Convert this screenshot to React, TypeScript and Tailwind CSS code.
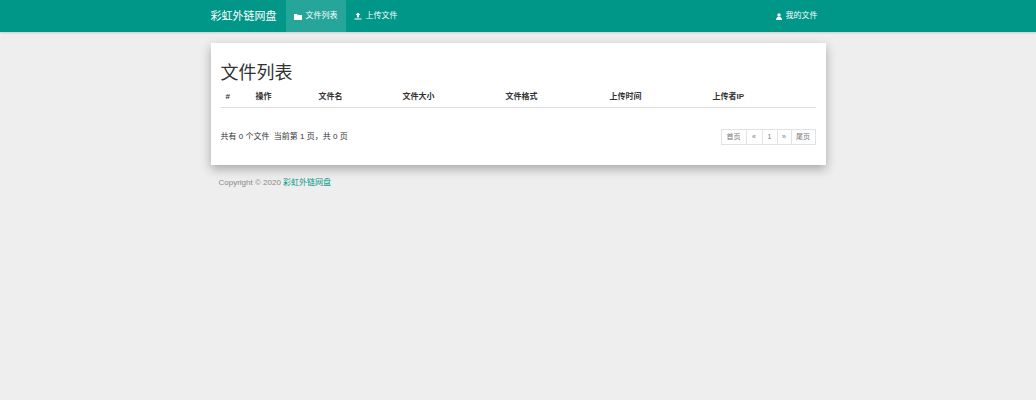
const font = { fontFamily: '"Liberation Sans", "Noto Sans CJK SC", sans-serif' }

export default function App() {
  const cols = [
    ["#", "w-[35px] pl-[5px]"],
    ["操作", "w-[63px]"],
    ["文件名", "w-[84px]"],
    ["文件大小", "w-[103px]"],
    ["文件格式", "w-[104px]"],
    ["上传时间", "w-[103px]"],
    ["上传者IP", "flex-1"],
  ]
  return (
    <div className="min-h-[400px] bg-[#eeeeee] text-[#333]" style={font}>
      <nav className="h-8 bg-[#009688] shadow-[0_1px_2px_rgba(0,0,0,0.15)]">
        <div className="mx-auto flex h-full w-[615px] items-stretch text-white">
          <span className="flex items-center px-0 text-[11px] pr-[9px]">彩虹外链网盘</span>
          <a className="flex items-center gap-1 bg-[#26a69a] px-2 text-[8px]">
            <svg width="8" height="7" viewBox="0 0 16 14" fill="white"><path d="M0 2h6l2 2h8v10H0z" /></svg>
            文件列表
          </a>
          <a className="flex items-center gap-1 px-2 text-[8px]">
            <svg width="8" height="8" viewBox="0 0 16 16" fill="white"><path d="M8 1l5 5h-3v5H6V6H3zM1 13h14v2H1z" /></svg>
            上传文件
          </a>
          <a className="ml-auto flex items-center gap-1 pr-2 text-[8px]">
            <svg width="6" height="7" viewBox="0 0 12 14" fill="white"><circle cx="6" cy="4" r="3.5" /><path d="M0 14c0-5 3-6 6-6s6 1 6 6z" /></svg>
            我的文件
          </a>
        </div>
      </nav>
      <div className="mx-auto mt-[11px] w-[615px] bg-white px-[10px] pb-[20px] pt-[18px] shadow-[0_4px_10px_rgba(0,0,0,0.3)]">
        <h1 className="text-[18px] leading-[24px]">文件列表</h1>
        <div className="mt-[6px] flex border-b border-[#ddd] pb-[4px] text-[8px] font-bold">
          {cols.map(([t, w]) => (
            <div key={t} className={w}>{t}</div>
          ))}
        </div>
        <div className="mt-[21px] flex items-center justify-between text-[8px]">
          <span>共有 0 个文件&nbsp;&nbsp;当前第 1 页，共 0 页</span>
          <div className="flex h-4 border border-[#e2e2e2] text-[7px] text-[#777]">
            <span className="flex w-6 items-center justify-center">首页</span>
            <span className="flex w-4 items-center justify-center border-l border-[#e2e2e2]">«</span>
            <span className="flex w-[15px] items-center justify-center border-l border-[#e2e2e2]">1</span>
            <span className="flex w-[14px] items-center justify-center border-l border-[#e2e2e2]">»</span>
            <span className="flex w-6 items-center justify-center border-l border-[#e2e2e2]">尾页</span>
          </div>
        </div>
      </div>
      <div className="mx-auto mt-[12px] w-[615px] px-2 text-[8px] text-[#888]">
        Copyright © 2020 <span className="text-[#009688]">彩虹外链网盘</span>
      </div>
    </div>
  )
}
